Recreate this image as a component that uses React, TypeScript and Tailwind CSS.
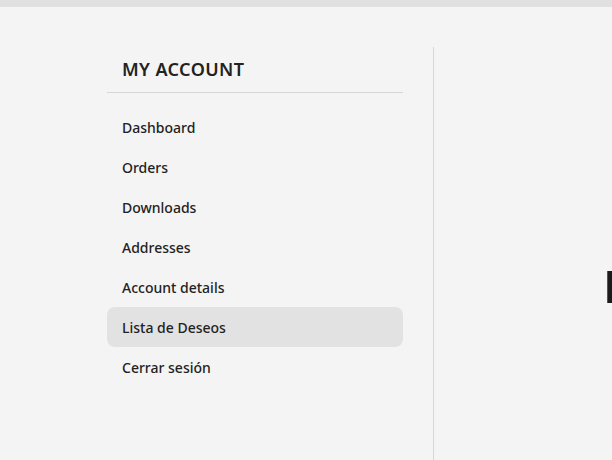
import React from 'react';

const MENU = [
  'Dashboard',
  'Orders',
  'Downloads',
  'Addresses',
  'Account details',
  'Lista de Deseos',
  'Cerrar sesión',
];

const ACTIVE = 'Lista de Deseos';

export default function App() {
  return (
    <div className="min-h-[460px] h-[460px] overflow-hidden bg-[#f4f4f4] text-[#1d1d1d] font-['Noto_Sans',sans-serif]">
      {/* top strip */}
      <div className="h-[7px] bg-[#e0e0e0]" />

      <div className="flex pl-[107px] pt-[40px] h-[453px]">
        {/* sidebar */}
        <aside className="w-[327px] pr-[30px] border-r border-[#d6d6d6] shrink-0">
          <h2 className="pt-[8px] pl-[15px] text-[18px] leading-[28px] font-semibold tracking-[0.4px] text-[#222]">
            MY ACCOUNT
          </h2>
          <div className="mt-[9px] border-b border-[#d6d6d6]" />
          <nav className="mt-[14px] flex flex-col">
            {MENU.map((item) => (
              <a
                key={item}
                href="#"
                className={
                  item === ACTIVE
                    ? 'h-[40px] flex items-center pl-[15px] rounded-[8px] bg-[#e2e2e2] text-[14px] font-medium text-[#222]'
                    : 'h-[40px] flex items-center pl-[15px] rounded-[8px] text-[14px] font-medium text-[#222]'
                }
              >
                {item}
              </a>
            ))}
          </nav>
        </aside>

        {/* content */}
        <main className="flex-1 flex justify-end pt-[224px]">
          <div className="w-[5px] h-[32px] bg-[#1b1b1b] border-l border-[#555]" />
        </main>
      </div>
    </div>
  );
}
